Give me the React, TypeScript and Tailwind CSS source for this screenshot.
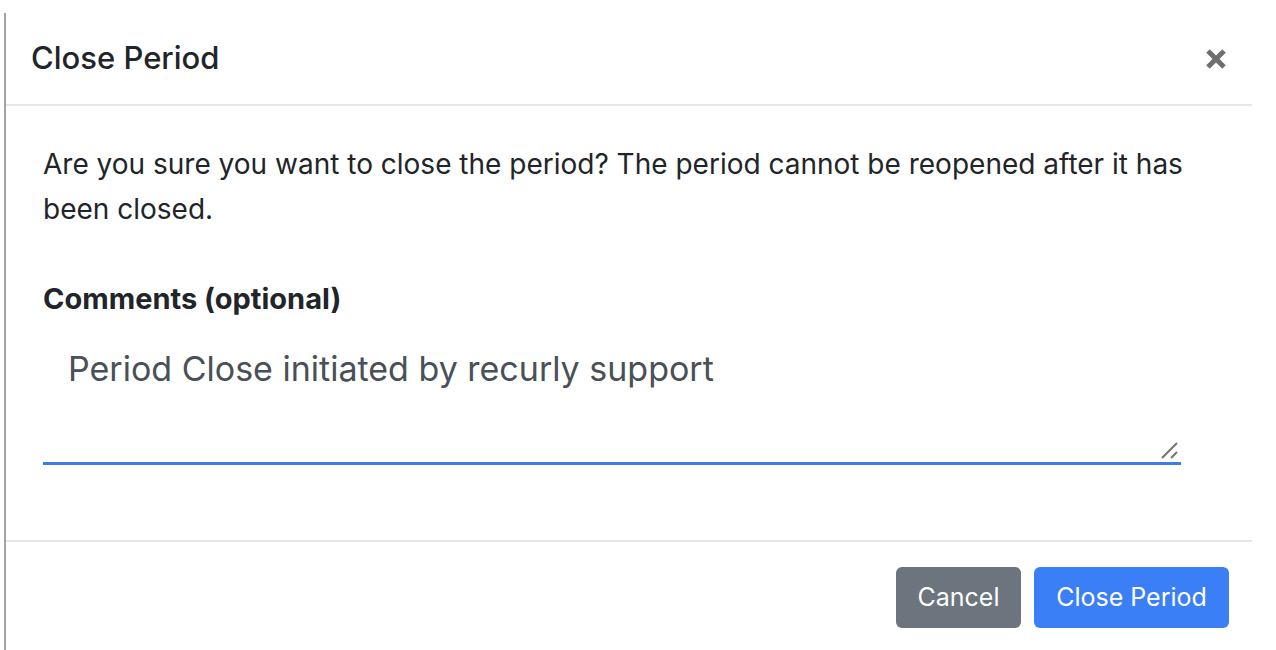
export default function App() {
  return (
    <div className="h-[650px] w-[1276px] overflow-hidden bg-white font-['Inter',sans-serif] text-[#212529]">
      <div className="ml-[4px] mt-[13px] h-[640px] w-[1248px] border-l-[2px] border-[#a3a3a3]">
        <div className="flex h-[93px] items-center justify-between border-b-2 border-[#e3e6ea] pl-[25px] pr-[24px]">
          <h5 className="pb-[2px] text-[31px] font-medium leading-none">Close Period</h5>
          <button className="flex h-[24px] w-[24px] items-center justify-center text-[#707070]">
            <svg width="22" height="22" viewBox="0 0 22 22">
              <path d="M3 3 L19 19 M19 3 L3 19" stroke="currentColor" strokeWidth="5" strokeLinecap="butt" />
            </svg>
          </button>
        </div>

        <div className="pl-[37px] pr-[60px] pt-[36px] pb-[75px]">
          <p className="text-[28px] leading-[45px]">
            Are you sure you want to close the period? The period cannot be reopened after it has been closed.
          </p>
          <label className="mt-[44px] block text-[29px] font-bold leading-[45px]">Comments (optional)</label>
          <div className="relative mt-[9px] w-[1138px]">
            <textarea
              className="block h-[135px] w-full resize-none border-0 border-b-[3px] border-[#3b7ee8] pl-[25px] pt-[16px] text-[34px] leading-[46px] text-[#495057] outline-none"
              defaultValue="Period Close initiated by recurly support"
            />
            <svg className="absolute bottom-[5px] right-[2px]" width="20" height="20" viewBox="0 0 20 20">
              <path d="M3 18 L18 3 M12 18 L18 12" stroke="#777" strokeWidth="2.2" />
            </svg>
          </div>
        </div>

        <div className="flex justify-end gap-[13px] border-t-2 border-[#e3e6ea] pr-[23px] pt-[25px]">
          <button className="h-[61px] w-[125px] rounded-[6px] bg-[#6c757d] text-[25px] text-white">Cancel</button>
          <button className="h-[61px] w-[195px] rounded-[6px] bg-[#3a7ff6] text-[25px] text-white">Close Period</button>
        </div>
      </div>
    </div>
  )
}
